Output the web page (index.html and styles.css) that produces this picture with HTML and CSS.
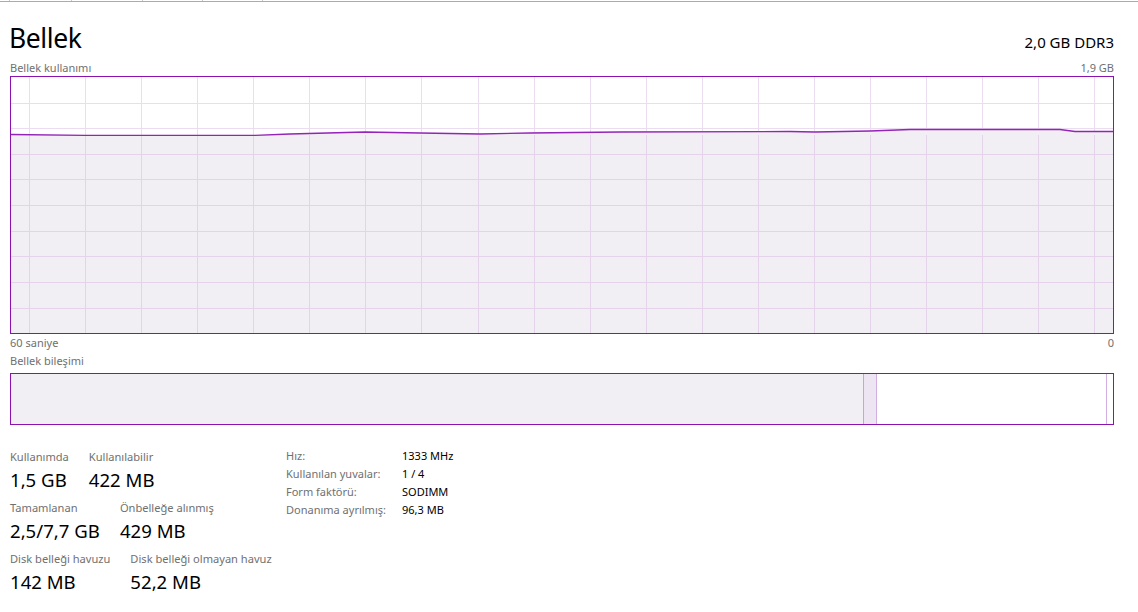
FILE: index.html
```html
<!DOCTYPE html>
<html lang="tr">
<head>
  <meta charset="UTF-8" />
  <title>Bellek</title>
  <link rel="stylesheet" href="styles.css">
</head>
<body>
  <div class="tabline">
    <span class="tab t1"></span>
    <span class="tab t2"></span>
    <span class="tab t3"></span>
    <span class="tab t4"></span>
    <span class="tab t5"></span>
  </div>

  <div class="page">
    <div class="head">
      <h1>Bellek</h1>
      <div class="spec">2,0 GB DDR3</div>
    </div>

    <div class="caption">
      <span>Bellek kullanımı</span>
      <span>1,9 GB</span>
    </div>

    <div class="graph">
      <svg width="1102" height="256" viewBox="0 0 1102 256">
        <g id="grid" stroke="#ecdcf1" stroke-width="1"></g>
        <polygon id="area" fill="#f1eff3"></polygon>
        <g id="grid2" stroke="#e4d3ea" stroke-width="1"></g>
        <polyline id="line" fill="none" stroke="#9423b8" stroke-width="1.3"></polyline>
      </svg>
    </div>

    <div class="caption axis">
      <span>60 saniye</span>
      <span>0</span>
    </div>

    <div class="caption comp-label">
      <span>Bellek bileşimi</span>
    </div>

    <div class="comp">
      <div class="seg inuse"></div>
      <div class="seg modified"></div>
      <div class="seg standby"></div>
      <div class="seg free"></div>
    </div>

    <div class="details">
      <div class="stats">
        <div class="stat-row">
          <div class="stat"><div class="label">Kullanımda</div><div class="value">1,5 GB</div></div>
          <div class="stat"><div class="label">Kullanılabilir</div><div class="value">422 MB</div></div>
        </div>
        <div class="stat-row">
          <div class="stat"><div class="label">Tamamlanan</div><div class="value">2,5/7,7 GB</div></div>
          <div class="stat"><div class="label">Önbelleğe alınmış</div><div class="value">429 MB</div></div>
        </div>
        <div class="stat-row">
          <div class="stat"><div class="label">Disk belleği havuzu</div><div class="value">142 MB</div></div>
          <div class="stat"><div class="label">Disk belleği olmayan havuz</div><div class="value">52,2 MB</div></div>
        </div>
      </div>

      <table class="props">
        <tr><td class="k">Hız:</td><td>1333 MHz</td></tr>
        <tr><td class="k">Kullanılan yuvalar:</td><td>1 / 4</td></tr>
        <tr><td class="k">Form faktörü:</td><td>SODIMM</td></tr>
        <tr><td class="k">Donanıma ayrılmış:</td><td>96,3 MB</td></tr>
      </table>
    </div>
  </div>

  <script>
    const NS = "http://www.w3.org/2000/svg";
    const W = 1102, H = 256;

    function addLine(group, x1, y1, x2, y2) {
      const l = document.createElementNS(NS, "line");
      l.setAttribute("x1", x1);
      l.setAttribute("y1", y1);
      l.setAttribute("x2", x2);
      l.setAttribute("y2", y2);
      group.appendChild(l);
    }

    // grid over the white part
    const grid = document.getElementById("grid");
    for (let k = 0; k < 20; k++) {
      const x = Math.round(18 + k * 56.07) + 0.5;
      addLine(grid, x, 0, x, H);
    }
    for (let k = 0; k < 9; k++) {
      const y = Math.round(25.5 + k * 25.65) + 0.5;
      addLine(grid, 0, y, W, y);
    }

    // memory usage samples (page x, page y)
    const samples = [
      [10, 134.5], [85, 135.3], [255, 135.3], [290, 134], [365, 132],
      [420, 133], [480, 134], [530, 133], [620, 132], [790, 131.5],
      [815, 132], [870, 131], [910, 129.5], [1060, 129.5], [1075, 131.5], [1113, 131.5]
    ];
    const pts = samples.map(([x, y]) => [x - 11, y - 77]);
    const ptStr = pts.map(p => p.join(",")).join(" ");
    document.getElementById("line").setAttribute("points", ptStr);
    document.getElementById("area").setAttribute("points",
      ptStr + " " + W + "," + H + " 0," + H);

    // same grid, a bit darker, where it crosses the filled area
    const grid2 = document.getElementById("grid2");
    for (let k = 0; k < 20; k++) {
      const x = Math.round(18 + k * 56.07) + 0.5;
      addLine(grid2, x, 58, x, H);
    }
    for (let k = 2; k < 9; k++) {
      const y = Math.round(25.5 + k * 25.65) + 0.5;
      addLine(grid2, 0, y, W, y);
    }
  </script>
</body>
</html>
```

FILE: styles.css
```css
body {
  margin: 0;
  background: white;
  font-family: 'Noto Sans', 'Open Sans', sans-serif;
  color: #000;
}

.tabline {
  display: flex;
  height: 1px;
  border-bottom: 1px solid #ababab;
}

.tab {
  border-right: 1px solid #c8c8c8;
}

.t1 { width: 9px; }
.t2 { width: 61px; }
.t3 { width: 70px; }
.t4 { width: 59px; }
.t5 { width: 59px; }

.page {
  padding: 0 24px 0 10px;
}

.head {
  display: flex;
  justify-content: space-between;
  align-items: baseline;
  height: 48px;
  padding-top: 10px;
}

h1 {
  margin: 0 0 0 -1px;
  font-size: 26.5px;
  font-weight: 400;
  line-height: 52px;
  letter-spacing: -0.4px;
}

.spec {
  font-size: 15px;
}

.caption {
  display: flex;
  justify-content: space-between;
  font-size: 11px;
  line-height: 16px;
  color: #707070;
  height: 16px;
}

.graph {
  border: 1px solid #8b12ae;
  height: 256px;
  width: 1102px;
}

.graph svg {
  display: block;
}

.axis {
  margin-top: 1px;
}

.comp-label {
  margin-top: 2px;
}

.comp {
  display: flex;
  margin-top: 4px;
  height: 50px;
  border: 1px solid #8b12ae;
  width: 1102px;
}

.seg {
  height: 100%;
}

.inuse {
  width: 852px;
  background: #f1eff3;
  border-right: 1px solid #c9a3d7;
}

.modified {
  width: 12px;
  background: #ede5f1;
  border-right: 1px solid #d3aee0;
}

.standby {
  width: 229px;
  border-right: 1px solid #d3aee0;
}

.free {
  flex: 1;
}

.details {
  display: flex;
  align-items: flex-start;
  margin-top: 24px;
}

.stats {
  width: 276px;
  white-space: nowrap;
}

.stat-row {
  display: flex;
  gap: 20px;
  margin-bottom: 5px;
}

.label {
  font-size: 11.1px;
  line-height: 16px;
  color: #707070;
}

.value {
  font-size: 18.6px;
  line-height: 30px;
}

.props {
  border-collapse: collapse;
  font-size: 11px;
  margin-top: -3px;
  white-space: nowrap;
}

.props td {
  padding: 0;
  height: 18px;
}

.props .k {
  color: #707070;
  width: 116px;
}
```
